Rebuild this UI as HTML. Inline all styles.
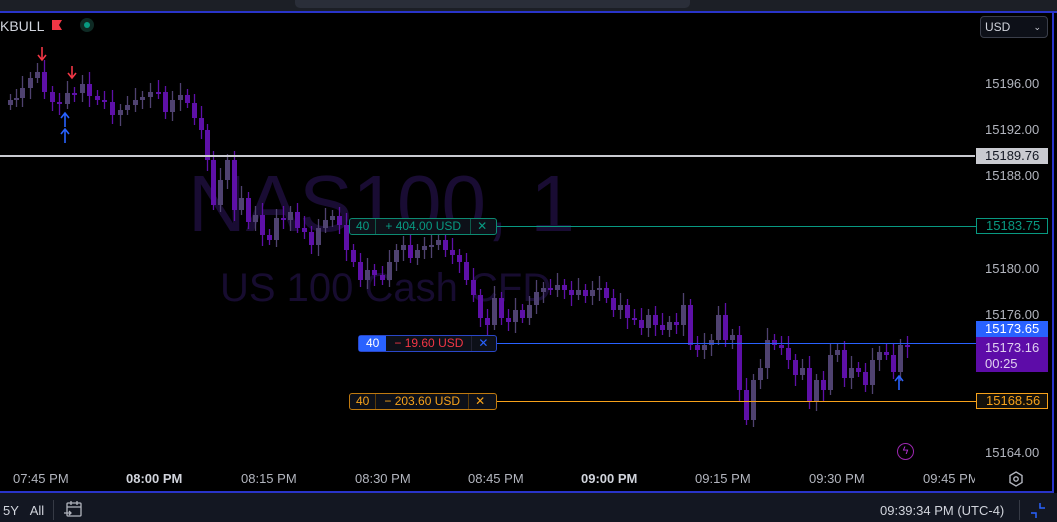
<!DOCTYPE html>
<html><head><meta charset="utf-8"><style>
body{margin:0;width:1057px;height:522px;background:#000;overflow:hidden;font-family:"Liberation Sans",sans-serif;position:relative}
.a{position:absolute}
.pl{position:absolute;left:985px;font-size:13px;color:#b2b5be}
.tl{position:absolute;top:471px;font-size:13px;color:#b2b5be}
.ord{position:absolute;height:15px;border:1px solid;border-radius:3px;display:flex;font-size:12px;line-height:15px;background:#0d1018}
.ord span{padding:0 6px}
.pt{position:absolute;left:976px;width:72px;height:16px;font-size:13px;line-height:16px;padding-left:9px;box-sizing:border-box}
</style></head><body>
<div class="a" style="left:0;top:0;width:1057px;height:11px;background:#1c1f26"></div>
<div class="a" style="left:295px;top:0;width:395px;height:8px;background:#2a2e39;border-radius:0 0 5px 5px"></div>
<div class="a" style="left:0;top:11px;width:1057px;height:2px;background:#2934c9"></div>
<div class="a" style="left:1052px;top:11px;width:2px;height:482px;background:#2934c9"></div>
<div class="a" style="left:0;top:18px;font-size:14px;color:#d1d4dc">KBULL</div>
<div class="a" style="left:52px;top:20px;width:10px;height:10px;background:#f23645;clip-path:polygon(0 0,100% 0,70% 50%,100% 100%,0 100%)"></div>
<div class="a" style="left:80px;top:18px;width:14px;height:14px;border-radius:50%;background:#0e2a24"></div>
<div class="a" style="left:84px;top:22px;width:6px;height:6px;border-radius:50%;background:#089981"></div>
<div class="a" style="left:980px;top:16px;width:68px;height:22px;border:1px solid #3a3e4a;border-radius:4px;box-sizing:border-box;background:#0d1018;color:#d1d4dc;font-size:12px;line-height:20px;padding-left:4px">USD<span style="position:absolute;right:6px;font-size:9px">⌄</span></div>
<div class="a" style="left:188px;top:158px;font-size:80px;color:#190c33;letter-spacing:0px">NAS100, 1</div>
<div class="a" style="left:220px;top:266px;font-size:40px;color:#170c30">US 100 Cash CFD</div>
<svg class="a" style="left:0;top:0" width="975" height="490" id="c"></svg>
<div class="a" style="left:0;top:155px;width:975px;height:2px;background:#c9cad0"></div>
<div class="a" style="left:497px;top:226px;width:480px;height:1px;background:#089981"></div>
<div class="a" style="left:497px;top:343px;width:480px;height:1px;background:#2962ff"></div>
<div class="a" style="left:497px;top:401px;width:480px;height:1px;background:#f7a21b"></div>
<div class="pl" style="top:76px">15196.00</div>
<div class="pl" style="top:122px">15192.00</div>
<div class="pl" style="top:168px">15188.00</div>
<div class="pl" style="top:261px">15180.00</div>
<div class="pl" style="top:307px">15176.00</div>
<div class="pl" style="top:445px">15164.00</div>
<div class="pt" style="top:148px;background:#c9cad0;color:#131722">15189.76</div>
<div class="pt" style="top:218px;border:1px solid #089981;background:#000;color:#089981;line-height:14px">15183.75</div>
<div class="pt" style="top:321px;background:#2962ff;color:#fff">15173.65</div>
<div class="a" style="left:976px;top:337px;width:72px;height:35px;background:#5d0ca8;color:#e0d0f0;font-size:13px;line-height:16px;padding:3px 0 0 9px;box-sizing:border-box">15173.16<br>00:25</div>
<div class="pt" style="top:393px;border:1px solid #f7a21b;background:#14110a;color:#f7a21b;line-height:14px">15168.56</div>
<div class="ord" style="left:349px;top:218px;width:146px;border-color:#0d8a72;color:#089981"><span style="border-right:1px solid #0d5a4a">40</span><span style="border-right:1px solid #0d5a4a;padding:0 9px">+ 404.00 USD</span><span style="padding:0 6px">✕</span></div>
<div class="ord" style="left:358px;top:335px;width:137px;border-color:#2a47c8;color:#f23645"><span style="background:#2962ff;color:#fff;padding:0 7px">40</span><span style="border-right:1px solid #223;padding:0 8px">− 19.60 USD</span><span style="color:#2962ff">✕</span></div>
<div class="ord" style="left:349px;top:393px;width:146px;border-color:#c07a10;color:#f7a21b"><span style="border-right:1px solid #5a3a08">40</span><span style="border-right:1px solid #5a3a08;padding:0 8px">− 203.60 USD</span><span>✕</span></div>
<div class="a" style="left:897px;top:443px;width:17px;height:17px;border:1.5px solid #9c27b0;border-radius:50%;box-sizing:border-box;color:#b030d0;font-size:11px;text-align:center;line-height:14px">ϟ</div>
<div class="tl" style="left:13px">07:45 PM</div>
<div class="tl" style="left:126px;font-weight:bold;color:#d1d4dc">08:00 PM</div>
<div class="tl" style="left:241px">08:15 PM</div>
<div class="tl" style="left:355px">08:30 PM</div>
<div class="tl" style="left:468px">08:45 PM</div>
<div class="tl" style="left:581px;font-weight:bold;color:#d1d4dc">09:00 PM</div>
<div class="tl" style="left:695px">09:15 PM</div>
<div class="tl" style="left:809px">09:30 PM</div>
<div class="tl" style="left:923px;width:52px;overflow:hidden;white-space:nowrap">09:45 PM</div>
<svg class="a" style="left:1007px;top:470px" width="18" height="18" fill="none" stroke="#b2b5be" stroke-width="1.4"><path d="M9 2l6 3.5v7L9 16l-6-3.5v-7z"/><circle cx="9" cy="9" r="2.2"/></svg>
<div class="a" style="left:0;top:491px;width:1052px;height:2px;background:#2934c9"></div>
<div class="a" style="left:0;top:493px;width:1057px;height:29px;background:#131722"></div>
<div class="a" style="left:3px;top:503px;font-size:13px;color:#d1d4dc">5Y&nbsp;&nbsp;&nbsp;All</div>
<div class="a" style="left:53px;top:500px;width:1px;height:20px;background:#363a45"></div>
<svg class="a" style="left:63px;top:499px" width="20" height="20" fill="none" stroke="#b2b5be" stroke-width="1.3"><rect x="4" y="4" width="14" height="13" rx="1"/><path d="M4 8h14M8 2v4M14 2v4M1 14h7M6 12l2 2-2 2"/></svg>
<div class="a" style="left:880px;top:503px;font-size:13px;color:#d1d4dc">09:39:34 PM (UTC-4)</div>
<div class="a" style="left:1019px;top:500px;width:1px;height:20px;background:#363a45"></div>
<svg class="a" style="left:1030px;top:502px" width="16" height="16" fill="none" stroke="#2962ff" stroke-width="1.5"><path d="M1 11h5v5M10 1v5h5"/></svg>
<script>
var p=[[8,100],[14,98],[20,88],[28,78],[35,72],[42,92],[50,102],[57,104],[65,93],[72,93],[80,84],[87,96],[95,100],[102,102],[110,115],[118,110],[125,105],[133,100],[140,97],[148,92],[156,92],[163,112],[170,100],[178,95],[185,103],[192,118],[199,130],[205,160],[211,205],[218,180],[225,160],[232,210],[239,198],[246,222],[253,215],[260,235],[267,240],[274,218],[281,220],[288,212],[295,228],[302,232],[309,245],[316,228],[323,220],[330,216],[337,225],[344,250],[351,262],[358,280],[365,270],[372,275],[380,280],[387,262],[394,250],[401,245],[408,258],[415,250],[422,246],[429,245],[436,240],[443,250],[450,255],[457,262],[464,280],[471,295],[478,318],[485,325],[492,298],[499,318],[506,322],[513,310],[520,318],[527,305],[534,292],[541,288],[548,290],[555,285],[562,290],[569,295],[576,290],[583,296],[590,290],[597,288],[604,298],[611,310],[618,305],[625,318],[632,320],[639,328],[646,315],[653,325],[660,330],[667,322],[674,325],[681,305],[688,345],[695,350],[702,345],[709,340],[716,315],[723,340],[730,335],[737,390],[744,420],[751,380],[758,368],[765,340],[772,345],[779,348],[786,360],[793,375],[800,368],[807,402],[814,380],[821,390],[828,355],[835,350],[842,378],[849,368],[856,372],[863,385],[870,360],[877,352],[884,355],[891,372],[898,345],[905,345]];
var s='',pv=p[0][1]+5;
for(var i=0;i<p.length;i++){var x=p[i][0],c=p[i][1],o=pv,t=Math.min(o,c),b=Math.max(o,c);if(b-t<2)b=t+2;var up=c<o;var col=up?'#4f4270':'#5e10a8';s+='<line x1="'+(x+2.5)+'" x2="'+(x+2.5)+'" y1="'+(t-6-(i%3)*3)+'" y2="'+(b+5+(i%4)*2)+'" stroke="'+col+'" stroke-width="1.3"/><rect x="'+x+'" y="'+t+'" width="5" height="'+(b-t)+'" fill="'+col+'"/>';pv=c;}
s+='<path d="M42 47v12M38 55l4 5 4-5M72 66v11M68 73l4 5 4-5" stroke="#f23645" stroke-width="1.6" fill="none"/>';
s+='<path d="M65 127v-13M61 118l4-5 4 5M65 143v-13M61 134l4-5 4 5M899 390v-13M895 381l4-5 4 5" stroke="#2962ff" stroke-width="1.6" fill="none"/>';
document.getElementById('c').innerHTML=s;
</script>
</body></html>
